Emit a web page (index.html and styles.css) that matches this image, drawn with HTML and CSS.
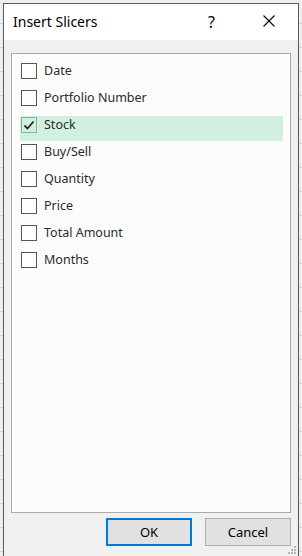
FILE: index.html
```html
<!DOCTYPE html>
<html>
<head>
    <title>Insert Slicers</title>
    <link rel="stylesheet" href="styles.css">
</head>
<body>
    <div class="dialog">
        <div class="titlebar">
            <span class="title">Insert Slicers</span>
            <span class="help">?</span>
            <span class="close">
                <svg width="12" height="12" viewBox="0 0 12 12"><path d="M0.5 0.5 L11.5 11.5 M11.5 0.5 L0.5 11.5" stroke="#000" stroke-width="1.1" fill="none"/></svg>
            </span>
        </div>
        <div class="content">
            <div class="list">
                <div class="item"><span class="box"></span><span class="label">Date</span></div>
                <div class="item"><span class="box"></span><span class="label">Portfolio Number</span></div>
                <div class="item selected">
                    <span class="box checked">
                        <svg width="14" height="14" viewBox="0 0 14 14"><path d="M2.5 7.5 L5.5 10.5 L11.5 3.5" stroke="#262626" stroke-width="1.8" fill="none"/></svg>
                    </span>
                    <span class="label">Stock</span>
                </div>
                <div class="item"><span class="box"></span><span class="label">Buy/Sell</span></div>
                <div class="item"><span class="box"></span><span class="label">Quantity</span></div>
                <div class="item"><span class="box"></span><span class="label">Price</span></div>
                <div class="item"><span class="box"></span><span class="label">Total Amount</span></div>
                <div class="item"><span class="box"></span><span class="label">Months</span></div>
            </div>
            <div class="buttons">
                <button class="btn default">OK</button>
                <button class="btn">Cancel</button>
            </div>
            <span class="grip">
                <svg width="10" height="10" viewBox="0 0 10 10" fill="#b4b4b4">
                    <rect x="7" y="0" width="2" height="2"/>
                    <rect x="4" y="3" width="2" height="2"/><rect x="7" y="3" width="2" height="2"/>
                    <rect x="1" y="6" width="2" height="2"/><rect x="4" y="6" width="2" height="2"/><rect x="7" y="6" width="2" height="2"/>
                </svg>
            </span>
        </div>
    </div>
</body>
</html>
```

FILE: styles.css
```css
html, body {
    height: 100%;
}
body {
    margin: 0;
    padding: 3px 3px 0 3px;
    box-sizing: border-box;
    overflow: hidden;
    font-family: 'Segoe UI', 'Noto Sans', 'Open Sans', sans-serif;
    background-color: #efefef;
    background-image: repeating-linear-gradient(to bottom, transparent 0, transparent 23px, #d4d4d4 23px, #d4d4d4 24px);
}
.dialog {
    border: 1px solid #5a5a5a;
    border-bottom: none;
    background: #f0f0f0;
    height: 100%;
    box-sizing: border-box;
    position: relative;
}
.titlebar {
    height: 36px;
    background: #fff;
    display: flex;
    align-items: center;
    position: relative;
}
.title {
    font-size: 14px;
    color: #000;
    margin-left: 9px;
    margin-top: -1px;
}
.help {
    position: absolute;
    left: 204px;
    top: 7px;
    font-size: 16px;
    line-height: 22px;
    color: #000;
}
.close {
    position: absolute;
    left: 259px;
    top: 11px;
    display: flex;
}
.content {
    padding: 13px 7px 0 7px;
}
.list {
    height: 460px;
    box-sizing: border-box;
    border: 1px solid #ababab;
    background: #fcfcfc;
    padding: 8px 7px 0 8px;
}
.item {
    height: 25px;
    margin-bottom: 2px;
    display: flex;
    align-items: flex-start;
    padding: 1px 0 0 1px;
    box-sizing: border-box;
}
.item.selected {
    background: #d3efdf;
}
.box {
    width: 16px;
    height: 16px;
    box-sizing: border-box;
    border: 1px solid #555;
    background: #fff;
    display: flex;
    align-items: center;
    justify-content: center;
}
.box.checked {
    border-color: #7bb894;
    background: #d3efdf;
}
.label {
    margin-left: 7px;
    font-size: 12.5px;
    line-height: 16px;
    color: #2b2b2b;
}
.buttons {
    display: flex;
    justify-content: flex-end;
    gap: 13px;
    margin-top: 5px;
}
.btn {
    width: 86px;
    height: 28px;
    box-sizing: border-box;
    border: 1px solid #adadad;
    background: #e1e1e1;
    font-family: inherit;
    font-size: 13px;
    color: #000;
    padding: 0;
}
.btn.default {
    border: 2px solid #0078d7;
}
.grip {
    position: absolute;
    right: 1px;
    bottom: 0;
    display: flex;
}
```
